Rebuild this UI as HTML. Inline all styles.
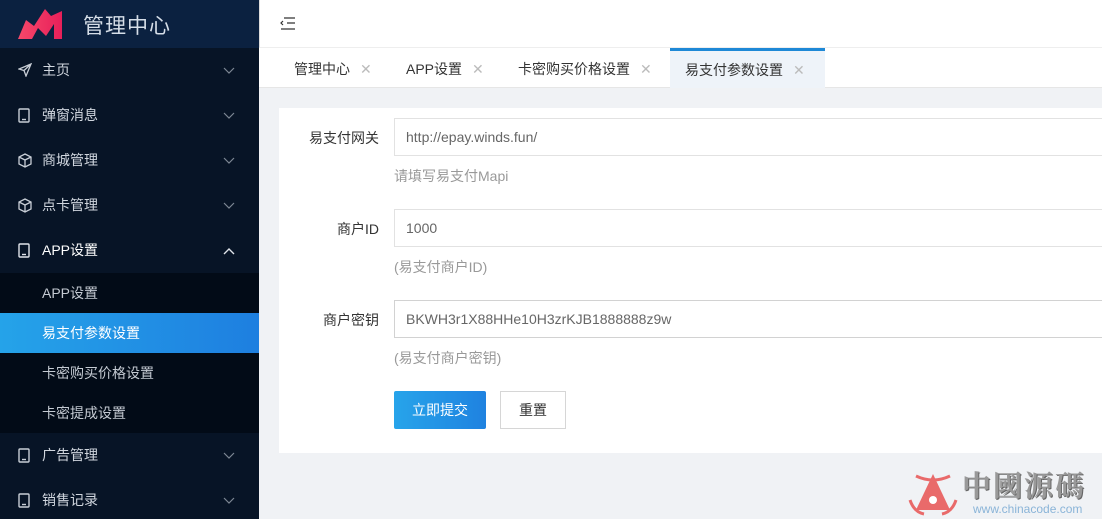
<!DOCTYPE html>
<html><head><meta charset="utf-8"><style>
*{margin:0;padding:0;box-sizing:border-box}
html,body{width:1102px;height:519px;overflow:hidden}
body{background:#f0f2f5;font-family:"Liberation Sans","Noto Sans CJK SC",sans-serif;font-size:14px;position:relative}
.side{position:absolute;left:0;top:0;width:259px;height:519px;background:#071426}
.logo{height:48px;background:#0b2140;position:relative}
.logo span{position:absolute;left:83px;top:10px;color:#d6dee8;font-size:21px;letter-spacing:1px}
.mi{height:45px;position:relative;color:#d0d6de;font-size:14px;line-height:45px;padding-left:42px}
.mi svg.ic{position:absolute;left:18px;top:15px}
.mi .ar{position:absolute;left:223px;top:19px}
.sub{background:#020b17}
.si{height:40px;line-height:40px;padding-left:42px;color:#c4cad2;font-size:14px}
.si.act{background:linear-gradient(90deg,#25a3e9,#1e7fe0);color:#fff}
.top{position:absolute;left:259px;top:0;right:0;height:48px;background:#fff;border-bottom:1px solid #eee;border-left:1px solid #ddd}
.tabs{position:absolute;left:259px;top:48px;right:0;height:40px;background:#fff;border-bottom:1px solid #e6e6e6}
.tab{position:absolute;top:0;height:40px;line-height:42px;font-size:14px;color:#333}
.tab i{font-style:normal;color:#bbb;margin-left:10px;font-size:14px}
.card{position:absolute;left:279px;top:108px;right:0;height:345px;background:#fff}
.lab{position:absolute;width:110px;text-align:right;left:269px;color:#333;font-size:14px}
.inp{position:absolute;left:394px;right:-2px;height:38px;border:1px solid #e2e2e2;color:#666;padding-left:11px;line-height:36px;font-size:14px}
.tip{position:absolute;left:394px;color:#999;font-size:14px}
</style></head><body>
<div class="side">
 <div class="logo">
  <svg style="position:absolute;left:18px;top:8px" width="46" height="32" viewBox="0 0 46 32"><defs><linearGradient id="g" x1="0" x2="1"><stop offset="0" stop-color="#f7486a"/><stop offset="1" stop-color="#e8205a"/></linearGradient></defs><path d="M0 31 L8 12 L16 18 L27 1 L33 8 L44 3 L44 31 L36 31 L36 16 L28 28 L20 20 L14 31Z" fill="url(#g)"/></svg>
  <span>管理中心</span>
 </div>
 <div class="mi"><svg class="ic" width="14" height="14" viewBox="0 0 14 14" fill="none" stroke="#c8ced6" stroke-width="1.3"><path d="M13 1 L1 6 L6 7.5 L8 13 Z M6 7.5 L13 1"/></svg>主页<svg class="ar" width="12" height="8" viewBox="0 0 12 8"><path d="M1 1 L6 6 L11 1" fill="none" stroke="#7d8794" stroke-width="1.2"/></svg></div>
 <div class="mi"><svg class="ic" width="12" height="15" viewBox="0 0 12 15" fill="none" stroke="#c8ced6" stroke-width="1.4"><rect x="1" y="1" width="10" height="13" rx="1"/><path d="M4 11.5h4"/></svg>弹窗消息<svg class="ar" width="12" height="8" viewBox="0 0 12 8"><path d="M1 1 L6 6 L11 1" fill="none" stroke="#7d8794" stroke-width="1.2"/></svg></div>
 <div class="mi"><svg class="ic" width="14" height="15" viewBox="0 0 14 15" fill="none" stroke="#c8ced6" stroke-width="1.3"><path d="M7 1 L13 4 V11 L7 14 L1 11 V4 Z M1 4 L7 7 L13 4 M7 7 V14"/></svg>商城管理<svg class="ar" width="12" height="8" viewBox="0 0 12 8"><path d="M1 1 L6 6 L11 1" fill="none" stroke="#7d8794" stroke-width="1.2"/></svg></div>
 <div class="mi"><svg class="ic" width="14" height="15" viewBox="0 0 14 15" fill="none" stroke="#c8ced6" stroke-width="1.3"><path d="M7 1 L13 4 V11 L7 14 L1 11 V4 Z M1 4 L7 7 L13 4 M7 7 V14"/></svg>点卡管理<svg class="ar" width="12" height="8" viewBox="0 0 12 8"><path d="M1 1 L6 6 L11 1" fill="none" stroke="#7d8794" stroke-width="1.2"/></svg></div>
 <div class="mi" style="color:#fff"><svg class="ic" width="12" height="15" viewBox="0 0 12 15" fill="none" stroke="#e0e4ea" stroke-width="1.4"><rect x="1" y="1" width="10" height="13" rx="1"/><path d="M4 11.5h4"/></svg>APP设置<svg class="ar" width="12" height="8" viewBox="0 0 12 8"><path d="M1 7 L6 2 L11 7" fill="none" stroke="#e0e4ea" stroke-width="1.4"/></svg></div>
 <div class="sub">
  <div class="si">APP设置</div>
  <div class="si act">易支付参数设置</div>
  <div class="si">卡密购买价格设置</div>
  <div class="si">卡密提成设置</div>
 </div>
 <div class="mi"><svg class="ic" width="12" height="15" viewBox="0 0 12 15" fill="none" stroke="#c8ced6" stroke-width="1.4"><rect x="1" y="1" width="10" height="13" rx="1"/><path d="M4 11.5h4"/></svg>广告管理<svg class="ar" width="12" height="8" viewBox="0 0 12 8"><path d="M1 1 L6 6 L11 1" fill="none" stroke="#7d8794" stroke-width="1.2"/></svg></div>
 <div class="mi"><svg class="ic" width="12" height="15" viewBox="0 0 12 15" fill="none" stroke="#c8ced6" stroke-width="1.4"><rect x="1" y="1" width="10" height="13" rx="1"/><path d="M4 11.5h4"/></svg>销售记录<svg class="ar" width="12" height="8" viewBox="0 0 12 8"><path d="M1 1 L6 6 L11 1" fill="none" stroke="#7d8794" stroke-width="1.2"/></svg></div>
</div>
<div class="top"><svg style="position:absolute;left:20px;top:17px" width="16" height="13" viewBox="0 0 16 13" fill="none" stroke="#333" stroke-width="1.2"><path d="M4 1h11M7 6h8M1 12h14M3 4 L1 6 L3 8"/></svg></div>
<div class="tabs">
 <div class="tab" style="left:35px">管理中心<i>✕</i></div>
 <div class="tab" style="left:147px">APP设置<i>✕</i></div>
 <div class="tab" style="left:259px">卡密购买价格设置<i>✕</i></div>
 <div class="tab" style="left:411px;width:155px;background:#eef3f9;border-top:3px solid #1e88d6;padding-left:15px;line-height:39px">易支付参数设置<i>✕</i></div>
</div>
<div class="card"></div>
<div class="lab" style="top:128px">易支付网关</div>
<div class="inp" style="top:118px">http://epay.winds.fun/</div>
<div class="tip" style="top:166px">请填写易支付Mapi</div>
<div class="lab" style="top:219px">商户ID</div>
<div class="inp" style="top:209px">1000</div>
<div class="tip" style="top:257px">(易支付商户ID)</div>
<div class="lab" style="top:310px">商户密钥</div>
<div class="inp" style="top:300px;border-color:#d2d2d2">BKWH3r1X88HHe10H3zrKJB1888888z9w</div>
<div class="tip" style="top:348px">(易支付商户密钥)</div>
<div style="position:absolute;left:394px;top:391px;width:92px;height:38px;background:linear-gradient(90deg,#27a4ea,#1f82e0);color:#fff;text-align:center;line-height:38px;border-radius:2px">立即提交</div>
<div style="position:absolute;left:500px;top:391px;width:66px;height:38px;border:1px solid #d6d6d6;background:#fff;color:#333;text-align:center;line-height:36px">重置</div>
<svg style="position:absolute;left:906px;top:470px" width="54" height="46" viewBox="0 0 54 46"><path d="M27 4 L10 40 L44 40 Z" fill="#e96a6a"/><path d="M10 6 Q27 14 44 6 M4 30 Q8 42 18 44 M50 30 Q46 42 36 44" stroke="#e96a6a" stroke-width="3" fill="none"/><circle cx="27" cy="30" r="4" fill="#fff"/></svg>
<div style="position:absolute;left:962px;top:468px;font-size:29px;font-weight:bold;color:#999;letter-spacing:2px;font-family:'Noto Serif CJK SC',serif;text-shadow:1px 1px 0 #666;line-height:34px">中國源碼</div>
<div style="position:absolute;left:973px;top:502px;font-size:12px;color:#8ab4d8;line-height:14px">www.chinacode.com</div>
</body></html>
